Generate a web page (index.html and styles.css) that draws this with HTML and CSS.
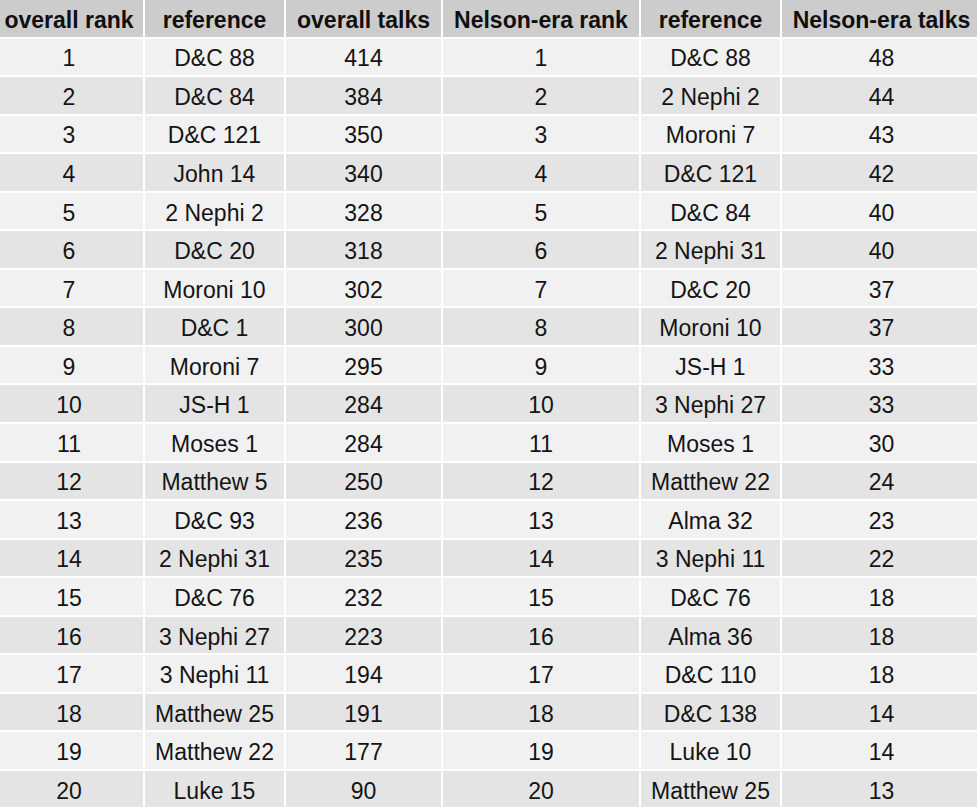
FILE: index.html
```html
<!DOCTYPE html>
<html>
<head>
<meta charset="utf-8">
<link rel="stylesheet" href="styles.css">
</head>
<body>
<div class="grid">
  <div class="cell head">overall rank</div><div class="cell head">reference</div><div class="cell head">overall talks</div><div class="cell head">Nelson-era rank</div><div class="cell head">reference</div><div class="cell head">Nelson-era talks</div>
  <div class="cell odd">1</div><div class="cell odd">D&amp;C 88</div><div class="cell odd">414</div><div class="cell odd">1</div><div class="cell odd">D&amp;C 88</div><div class="cell odd">48</div>
  <div class="cell even">2</div><div class="cell even">D&amp;C 84</div><div class="cell even">384</div><div class="cell even">2</div><div class="cell even">2 Nephi 2</div><div class="cell even">44</div>
  <div class="cell odd">3</div><div class="cell odd">D&amp;C 121</div><div class="cell odd">350</div><div class="cell odd">3</div><div class="cell odd">Moroni 7</div><div class="cell odd">43</div>
  <div class="cell even">4</div><div class="cell even">John 14</div><div class="cell even">340</div><div class="cell even">4</div><div class="cell even">D&amp;C 121</div><div class="cell even">42</div>
  <div class="cell odd">5</div><div class="cell odd">2 Nephi 2</div><div class="cell odd">328</div><div class="cell odd">5</div><div class="cell odd">D&amp;C 84</div><div class="cell odd">40</div>
  <div class="cell even">6</div><div class="cell even">D&amp;C 20</div><div class="cell even">318</div><div class="cell even">6</div><div class="cell even">2 Nephi 31</div><div class="cell even">40</div>
  <div class="cell odd">7</div><div class="cell odd">Moroni 10</div><div class="cell odd">302</div><div class="cell odd">7</div><div class="cell odd">D&amp;C 20</div><div class="cell odd">37</div>
  <div class="cell even">8</div><div class="cell even">D&amp;C 1</div><div class="cell even">300</div><div class="cell even">8</div><div class="cell even">Moroni 10</div><div class="cell even">37</div>
  <div class="cell odd">9</div><div class="cell odd">Moroni 7</div><div class="cell odd">295</div><div class="cell odd">9</div><div class="cell odd">JS-H 1</div><div class="cell odd">33</div>
  <div class="cell even">10</div><div class="cell even">JS-H 1</div><div class="cell even">284</div><div class="cell even">10</div><div class="cell even">3 Nephi 27</div><div class="cell even">33</div>
  <div class="cell odd">11</div><div class="cell odd">Moses 1</div><div class="cell odd">284</div><div class="cell odd">11</div><div class="cell odd">Moses 1</div><div class="cell odd">30</div>
  <div class="cell even">12</div><div class="cell even">Matthew 5</div><div class="cell even">250</div><div class="cell even">12</div><div class="cell even">Matthew 22</div><div class="cell even">24</div>
  <div class="cell odd">13</div><div class="cell odd">D&amp;C 93</div><div class="cell odd">236</div><div class="cell odd">13</div><div class="cell odd">Alma 32</div><div class="cell odd">23</div>
  <div class="cell even">14</div><div class="cell even">2 Nephi 31</div><div class="cell even">235</div><div class="cell even">14</div><div class="cell even">3 Nephi 11</div><div class="cell even">22</div>
  <div class="cell odd">15</div><div class="cell odd">D&amp;C 76</div><div class="cell odd">232</div><div class="cell odd">15</div><div class="cell odd">D&amp;C 76</div><div class="cell odd">18</div>
  <div class="cell even">16</div><div class="cell even">3 Nephi 27</div><div class="cell even">223</div><div class="cell even">16</div><div class="cell even">Alma 36</div><div class="cell even">18</div>
  <div class="cell odd">17</div><div class="cell odd">3 Nephi 11</div><div class="cell odd">194</div><div class="cell odd">17</div><div class="cell odd">D&amp;C 110</div><div class="cell odd">18</div>
  <div class="cell even">18</div><div class="cell even">Matthew 25</div><div class="cell even">191</div><div class="cell even">18</div><div class="cell even">D&amp;C 138</div><div class="cell even">14</div>
  <div class="cell odd">19</div><div class="cell odd">Matthew 22</div><div class="cell odd">177</div><div class="cell odd">19</div><div class="cell odd">Luke 10</div><div class="cell odd">14</div>
  <div class="cell even">20</div><div class="cell even">Luke 15</div><div class="cell even">90</div><div class="cell even">20</div><div class="cell even">Matthew 25</div><div class="cell even">13</div>
</div>
</body>
</html>
```

FILE: styles.css
```css
html, body {
  margin: 0;
  padding: 0;
  background: #ffffff;
  overflow: hidden;
}
.grid {
  display: grid;
  grid-template-columns: 148px 139px 155px 196px 139px 199px;
  grid-auto-rows: 36.55px;
  column-gap: 2px;
  row-gap: 2px;
  margin-left: -5px;
  width: max-content;
  font-family: "Liberation Sans", Arial, sans-serif;
  font-size: 23px;
  color: #141414;
}
.cell {
  display: flex;
  align-items: center;
  justify-content: center;
  white-space: nowrap;
  padding-top: 4px;
  box-sizing: border-box;
}
.head {
  background: #cccccc;
  font-weight: bold;
  color: #0f0f0f;
}
.odd {
  background: #f1f1f1;
}
.even {
  background: #e4e4e4;
}
```
